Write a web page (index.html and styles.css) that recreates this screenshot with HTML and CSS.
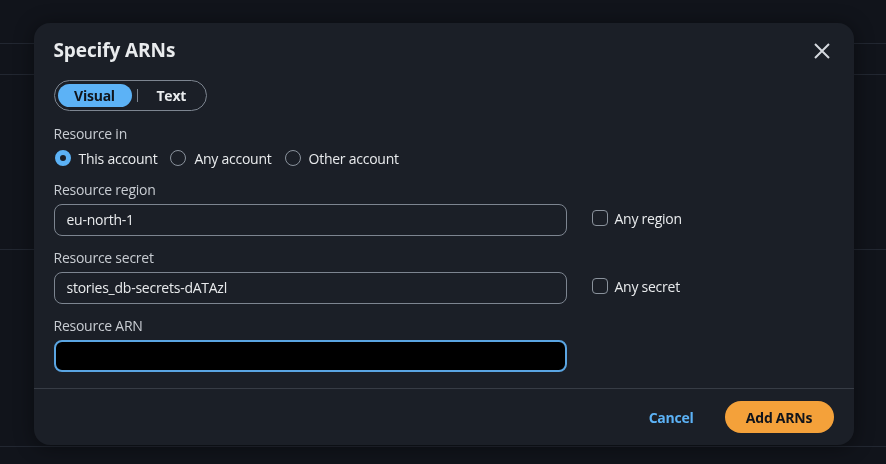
FILE: index.html
```html
<!DOCTYPE html>
<html>
<head>
<meta charset="utf-8">
<link rel="stylesheet" href="styles.css">
</head>
<body>
<div class="page">
  <div class="bg-row r1"></div>
  <div class="bg-row r2"></div>
  <div class="bg-row r3"></div>
  <div class="bg-row r4"></div>
</div>
<div class="overlay">
  <div class="modal">
    <div class="modal-header">
      <h2 class="title">Specify ARNs</h2>
      <button class="close" aria-label="Close">
        <svg width="18" height="18" viewBox="0 0 18 18"><path d="M2 2 L16 16 M16 2 L2 16" stroke="#d5d8de" stroke-width="2" fill="none"/></svg>
      </button>
    </div>
    <div class="modal-body">
      <div class="segmented">
        <span class="seg seg-active">Visual</span>
        <span class="seg-sep"></span>
        <span class="seg">Text</span>
      </div>
      <div class="label l-first">Resource in</div>
      <div class="radios">
        <label class="radio"><span class="rb rb-on"></span>This account</label>
        <label class="radio"><span class="rb"></span>Any account</label>
        <label class="radio"><span class="rb"></span>Other account</label>
      </div>
      <div class="label">Resource region</div>
      <div class="field-row">
        <div class="input">eu-north-1</div>
        <label class="check"><span class="cb"></span>Any region</label>
      </div>
      <div class="label">Resource secret</div>
      <div class="field-row">
        <div class="input">stories_db-secrets-dATAzl</div>
        <label class="check"><span class="cb"></span>Any secret</label>
      </div>
      <div class="label">Resource ARN</div>
      <div class="field-row">
        <div class="input input-focus"></div>
      </div>
    </div>
    <div class="modal-footer">
      <button class="link-btn">Cancel</button>
      <button class="primary-btn">Add ARNs</button>
    </div>
  </div>
</div>
</body>
</html>
```
FILE: styles.css
```css
* { box-sizing: border-box; }
html, body { margin: 0; padding: 0; }
body {
  width: 886px;
  height: 464px;
  overflow: hidden;
  background: #11141b;
  font-family: "Open Sans", "Noto Sans", sans-serif;
  font-size: 14px;
  letter-spacing: -0.25px;
  color: #e9ebed;
}
.page { display: flex; flex-direction: column; }
.bg-row { border-bottom: 1px solid #222731; }
.r1 { height: 44px; }
.r2 { height: 31px; }
.r3 { height: 175px; }
.r4 { height: 197px; }

.overlay {
  position: fixed;
  inset: 0;
  display: flex;
  justify-content: center;
  align-items: flex-start;
  padding-top: 23px;
  padding-left: 1px;
}
.modal {
  width: 820px;
  height: 422px;
  background: #1b1f27;
  border-radius: 16px;
  box-shadow: 0 2px 20px rgba(0,0,0,0.45);
  display: flex;
  flex-direction: column;
}
.modal-header {
  display: flex;
  align-items: center;
  justify-content: space-between;
  padding: 15px 22px 0 20px;
}
.title {
  margin: 0;
  font-size: 19px;
  line-height: 24px;
  font-weight: 700;
  color: #e9ebed;
  letter-spacing: -0.1px;
}
.close {
  background: none;
  border: 0;
  padding: 0;
  width: 20px;
  height: 20px;
  display: flex;
  align-items: center;
  justify-content: center;
  cursor: pointer;
  margin-top: 2px;
}
.modal-body {
  padding: 0 20px 16px 20px;
  border-bottom: 1px solid #373c45;
}
.segmented {
  margin-top: 18px;
  display: inline-flex;
  align-items: center;
  height: 31px;
  border: 1px solid #7d8590;
  border-radius: 16px;
  padding: 0 3px;
}
.seg {
  font-weight: 700;
  font-size: 14px;
  line-height: 23px;
  height: 23px;
  padding: 0 13px;
  color: #e9ebed;
  border-radius: 12px;
}
.seg-active {
  background: #5cb2f6;
  color: #10141b;
  width: 74px;
  text-align: center;
}
.seg-sep {
  width: 1px;
  height: 13px;
  background: #7d8590;
  margin: 0 5px 0 5px;
}
.seg:last-child { padding: 0 17px 0 14px; }
.label {
  margin-top: 12px;
  line-height: 20px;
  color: #c8ccd2;
  font-size: 14px;
}
.l-first { margin-top: 13px; }
.radios {
  margin-top: 4px;
  display: flex;
  height: 20px;
  align-items: center;
}
.radio {
  display: flex;
  align-items: center;
  margin-right: 12px;
  color: #e9ebed;
}
.rb {
  width: 16px;
  height: 16px;
  border-radius: 50%;
  border: 1.5px solid #8a929c;
  margin-right: 8px;
  margin-left: 1px;
}
.rb-on {
  border: 5px solid #5cb2f6;
  background: #1b1f27;
}
.field-row {
  margin-top: 4px;
  display: flex;
  align-items: center;
}
.input {
  width: 513px;
  height: 32px;
  border: 1px solid #7d8590;
  border-radius: 8px;
  padding: 0 12px;
  line-height: 30px;
  color: #e9ebed;
}
.input-focus {
  background: #000;
  border: 2px solid #5aa5e2;
}
.check {
  display: flex;
  align-items: center;
  margin-left: 25px;
  margin-bottom: 4px;
  color: #e9ebed;
}
.cb {
  width: 16px;
  height: 16px;
  border: 1.5px solid #8a929c;
  border-radius: 4px;
  margin-right: 7px;
}
.modal-footer {
  flex: 1;
  display: flex;
  align-items: center;
  justify-content: flex-end;
  padding: 0 20px 0 20px;
}
.link-btn {
  background: none;
  border: 0;
  font-family: inherit;
  font-size: 14px;
  font-weight: 700;
  letter-spacing: -0.25px;
  color: #5cb2f6;
  padding: 0;
  margin-right: 31px;
  cursor: pointer;
}
.primary-btn {
  background: #f4a13a;
  border: 0;
  border-radius: 16px;
  height: 32px;
  width: 109px;
  font-family: inherit;
  font-size: 14px;
  font-weight: 700;
  letter-spacing: -0.25px;
  color: #10141b;
  cursor: pointer;
}
```
